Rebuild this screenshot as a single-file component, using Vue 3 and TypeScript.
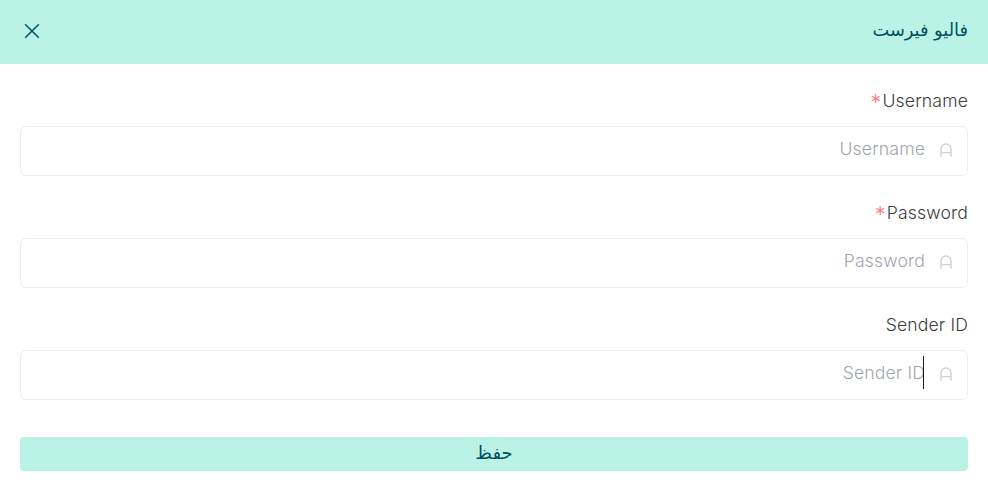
<script setup lang="ts">
interface Field { label: string; required: boolean; active?: boolean }
const fields: Field[] = [
  { label: 'Username', required: true },
  { label: 'Password', required: true },
  { label: 'Sender ID', required: false, active: true },
]
</script>

<template>
  <div class="page" dir="rtl">
    <header class="head">
      <h1 class="title">فاليو فيرست</h1>
      <button class="close" type="button" aria-label="close">
        <svg width="16" height="16" viewBox="0 0 16 16" fill="none">
          <path d="M1.2 1.2 14.8 14.8M14.8 1.2 1.2 14.8" stroke="#00505f" stroke-width="1.5" />
        </svg>
      </button>
    </header>
    <form class="form" @submit.prevent>
      <div v-for="f in fields" :key="f.label" class="field">
        <label class="label" dir="ltr"><span v-if="f.required" class="star">*</span>{{ f.label }}</label>
        <div class="box">
          <svg class="icon" width="12" height="15" viewBox="0 0 12 15" fill="none">
            <path d="M1 14V6a5 5 0 0 1 10 0v8M1 9.6h10" stroke="#cfd2d8" stroke-width="1.4" />
          </svg>
          <span class="ph-wrap">
            <span class="ph" dir="ltr">{{ f.label }}</span>
            <i v-if="f.active" class="caret"></i>
          </span>
        </div>
      </div>
      <button class="save" type="submit">حفظ</button>
    </form>
  </div>
</template>

<style>
html, body { margin: 0; background: #fff; }
</style>

<style scoped>
.page {
  width: 988px;
  height: 487px;
  font-family: "Inter", "DejaVu Sans", sans-serif;
  color: #3a3a3f;
  overflow: hidden;
}
.head {
  height: 64px;
  background: #baf3e5;
  display: flex;
  align-items: center;
  justify-content: space-between;
  padding: 0 20px;
}
.title {
  margin: 0 0 6px;
  font: 400 17.8px "DejaVu Sans", sans-serif;
  color: #00505f;
}
.close {
  border: 0;
  background: none;
  padding: 0;
  margin-left: 4px;
  margin-bottom: 2px;
  display: flex;
}
.form {
  padding: 24px 20px 0;
  display: flex;
  flex-direction: column;
}
.field { margin-bottom: 24px; }
.label {
  display: block;
  height: 38px;
  line-height: 26px;
  font-size: 17.6px;
  letter-spacing: 0.15px;
  font-weight: 300;
  text-align: right;
  color: #3c3c41;
}
.star {
  color: #ff7a7a;
  font-size: 22px;
  line-height: 20px;
  vertical-align: -3px;
  margin-right: 1px;
}
.box {
  height: 48px;
  border: 1px solid #eceef1;
  border-radius: 6px;
  display: flex;
  align-items: center;
  padding: 0 15px;
  gap: 15px;
}
.icon { flex: none; margin-bottom: 2px; }
.ph-wrap {
  position: relative;
  display: block;
  line-height: 22px;
  margin-bottom: 5px;
}
.ph {
  font-size: 17.6px;
  letter-spacing: 0.15px;
  font-weight: 300;
  color: #9fa4b4;
}
.caret {
  position: absolute;
  right: 1px;
  top: -6px;
  width: 1px;
  height: 33px;
  background: #1a1a1a;
}
.save {
  margin-top: 13px;
  height: 34px;
  border: 0;
  border-radius: 4px;
  background: #baf3e5;
  color: #00505f;
  font: 400 18px "DejaVu Sans", sans-serif;
  padding: 0 0 3px;
}
</style>
